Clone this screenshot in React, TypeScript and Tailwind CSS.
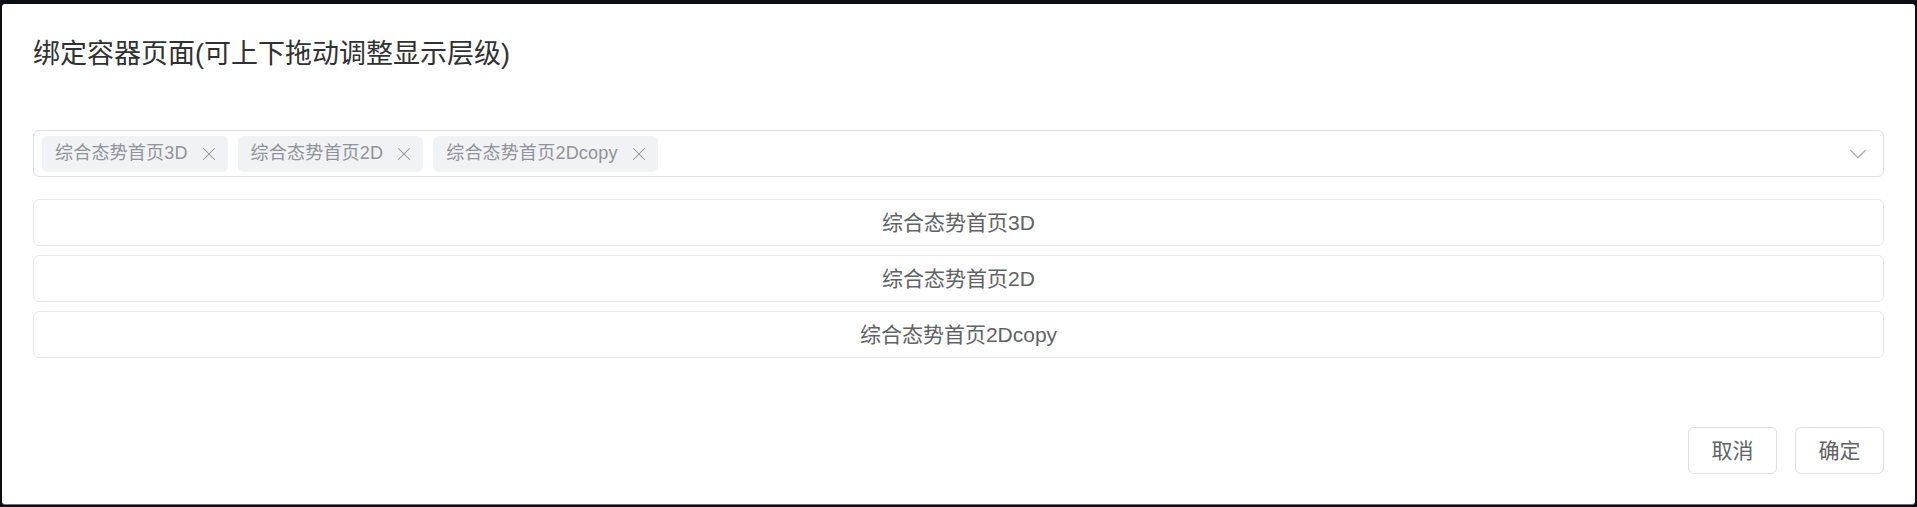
import { X, ChevronDown } from 'lucide-react'

const pages = ['综合态势首页3D', '综合态势首页2D', '综合态势首页2Dcopy']

const font = { fontFamily: '"Liberation Sans", "Noto Sans CJK SC", sans-serif' }

export default function App() {
  return (
    <div className="h-[507px] w-[1917px] bg-[#0a0d13] pt-[4px] px-[2px] overflow-hidden" style={font}>
      {/* Dialog */}
      <div className="flex h-[500px] flex-col rounded-[3px] bg-white px-[31px] pb-[30px] pt-[30px] shadow-[0_1px_0_#6b7280]">
        <h2 className="text-[27px] leading-[40px] text-[#303133]">绑定容器页面(可上下拖动调整显示层级)</h2>

        {/* Multi select */}
        <div className="mt-[56px] flex h-[47px] items-center rounded-[6px] border border-[#dcdfe6] pl-[8px] pr-[10px]">
          <div className="flex flex-1 items-center gap-[10px]">
            {pages.map((p) => (
              <span
                key={p}
                className="flex h-[36px] items-center gap-[10px] rounded-[6px] bg-[#f0f2f5] pl-[13px] pr-[8px] text-[18px] text-[#909399]"
              >
                <span className="tracking-[0.2px]">{p}</span>
                <X className="h-[22px] w-[22px] text-[#909399]" strokeWidth={1.1} />
              </span>
            ))}
          </div>
          <ChevronDown className="h-[30px] w-[30px] text-[#a8abb2]" strokeWidth={0.9} />
        </div>

        {/* Draggable list */}
        <div className="mt-[22px] flex flex-col gap-[9px]">
          {pages.map((p) => (
            <div
              key={p}
              className="flex h-[47px] items-center justify-center rounded-[6px] border border-[#e4e7ed] text-[21px] text-[#606266]"
            >
              {p}
            </div>
          ))}
        </div>

        {/* Footer */}
        <div className="mt-auto flex justify-end gap-[18px]">
          <button className="h-[47px] w-[89px] rounded-[6px] border border-[#dcdfe6] text-[21px] text-[#606266]">取消</button>
          <button className="h-[47px] w-[89px] rounded-[6px] border border-[#dcdfe6] text-[21px] text-[#606266]">确定</button>
        </div>
      </div>
    </div>
  )
}
